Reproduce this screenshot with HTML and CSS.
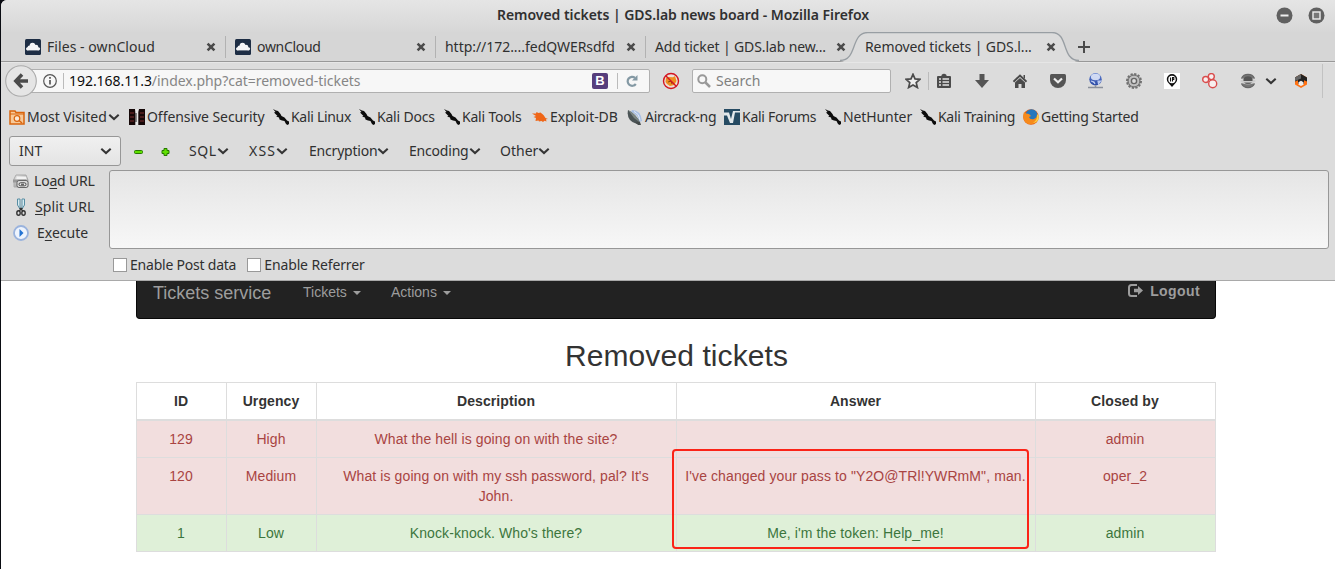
FILE: index.html
```html
<!DOCTYPE html>
<html lang="en">
<head>
<meta charset="utf-8">
<title>Removed tickets | GDS.lab news board</title>
<link rel="stylesheet" href="styles.css">
</head>
<body>
<svg class="defs" width="0" height="0">
  <defs>
    <linearGradient id="gBlue" x2="0" y2="1"><stop stop-color="#5f7fd0"/><stop offset="1" stop-color="#2c4aa4"/></linearGradient>
    <linearGradient id="gPan" x2="1" y2="1"><stop stop-color="#eee"/><stop offset="1" stop-color="#777"/></linearGradient>
    <symbol id="cloud" viewBox="0 0 16 16"><rect width="16" height="16" rx="1.5" fill="#1d2d44"/><g fill="#f4f5f7"><circle cx="7.500" cy="6.500" r="2.800"/><circle cx="4.500" cy="8.500" r="2"/><circle cx="11" cy="8" r="2.300"/><circle cx="2.600" cy="9.800" r="1.600"/><circle cx="13.500" cy="9.800" r="1.600"/><rect x="2.500" y="8.500" width="11" height="2.900"/></g></symbol>
    <symbol id="x" viewBox="0 0 10 10"><path d="M1.600 1.600l6.800 6.800M8.400 1.600L1.600 8.400" stroke="#4b4b4b" stroke-width="2.600"/></symbol>
    <symbol id="chev" viewBox="0 0 12 8"><path d="M1.300 1.800L6 6l4.700-4.200" fill="none" stroke="#353535" stroke-width="2.100"/></symbol>
    <symbol id="kali" viewBox="0 0 16 16"><path d="M0 0l3 1.500 2 .5 2.500 3 1 2 3 1.500 2.500 3 2 1 .5 2-2 1.500-1.500-1-1.500-3L9 11.500l-2.500-1-.5-2-3-1 1.500-.5L1 3.500 2.500 3z" fill="#0c0c0c"/></symbol>
  </defs>
</svg>
<div class="window">
  <div class="titlebar">
    <span class="title">Removed tickets | GDS.lab news board - Mozilla Firefox</span>
    <svg class="controls" width="49" height="17" viewBox="0 0 49 17"><circle cx="8.500" cy="8.500" r="8" fill="#606060"/><path d="M4.500 8.500h8" stroke="#eee" stroke-width="2"/><circle cx="40.500" cy="8.500" r="8" fill="#606060"/><rect x="37" y="5" width="7" height="7" fill="#777" stroke="#eee" stroke-width="1.400"/></svg>
  </div>

  <div class="tabs">
    <div class="tab"><svg class="i16"><use href="#cloud"/></svg><span class="t1">Files - ownCloud</span><svg class="x"><use href="#x"/></svg></div>
    <div class="tab"><svg class="i16"><use href="#cloud"/></svg><span class="t2">ownCloud</span><svg class="x"><use href="#x"/></svg></div>
    <div class="tab"><span class="t3">http://172....fedQWERsdfd</span><svg class="x"><use href="#x"/></svg></div>
    <div class="tab last"><span class="t4">Add ticket | GDS.lab new...</span><svg class="x"><use href="#x"/></svg></div>
    <div class="tab active">
      <svg class="shape" width="250" height="31" viewBox="0 0 250 31"><path d="M4 30C22 28.500 14 1 32 1H216C233 1 225 28.500 243 30z" fill="#dcdcdc"/><path d="M4 28.500C22 28.500 14 .5 32 .5H216C233 .5 225 28.500 243 28.500" fill="none" stroke="#989ea3" stroke-width="1.300"/></svg>
      <span class="t5">Removed tickets | GDS.l...</span><svg class="x"><use href="#x"/></svg>
    </div>
    <svg class="plus" width="12" height="12" viewBox="0 0 12 12"><path d="M6 0v12M0 6h12" stroke="#4b4b4b" stroke-width="2"/></svg>
  </div>

  <div class="nav">
    <svg class="back" width="32" height="32" viewBox="0 0 32 32"><circle cx="16" cy="16" r="15.300" fill="#e5e5e5" stroke="#aaa" stroke-width="1.100"/><path d="M17 9.500l-6.200 6.500 6.200 6.500M11.500 16H23" fill="none" stroke="#4b4b4b" stroke-width="3.500"/></svg>
    <div class="urlbar">
      <svg class="info" width="14" height="14" viewBox="0 0 14 14"><circle cx="7" cy="7" r="6.300" fill="none" stroke="#555" stroke-width="1.200"/><path d="M7 6v4.500M7 3v1.800" stroke="#555" stroke-width="1.700"/></svg>
      <span class="url"><b>192.168.11.3</b>/index.php?cat=removed-tickets</span>
      <span class="boot">B</span>
      <svg class="reload" width="12" height="12" viewBox="0 0 12 12"><path d="M9 2.800A4.500 4.500 0 1 0 9.800 9" fill="none" stroke="#8499a4" stroke-width="2.200"/><path d="M11.500 0v5.500H6z" fill="#8499a4"/></svg>
    </div>
    <svg class="nofox" width="18" height="18" viewBox="0 0 18 18"><circle cx="9" cy="9" r="7.500" fill="#ece0d8"/><path d="M4 6l2-1 5 .2L13 4l1.500 5-2.200 4-4.300 1-3-2-1.500-2z" fill="#ee8d20"/><path d="M6 10l3-1 1 3" stroke="#8a4810" fill="none"/><circle cx="9" cy="9" r="7.500" fill="none" stroke="#d31420" stroke-width="1.400"/><path d="M4 4l10 10" stroke="#d31420" stroke-width="1.400"/></svg>
    <div class="search"><svg width="14" height="14" viewBox="0 0 14 14"><circle cx="5.300" cy="5.300" r="4" fill="none" stroke="#999" stroke-width="2"/><path d="M8.500 8.500l4.500 4.500" stroke="#999" stroke-width="2.500"/></svg><span>Search</span></div>
    <div class="tools">
      <svg class="star" viewBox="0 0 16 16"><path d="M8 1.300l2 4.600 5 .4-3.800 3.300 1.200 4.900L8 11.900l-4.400 2.600 1.200-4.900L1 6.300l5-.4z" fill="#eee" stroke="#4b4b4b" stroke-width="1.700"/></svg>
      <i class="sep"></i>
      <svg viewBox="0 0 16 16"><path d="M2 3h3.500V2Q8-.5 10.500 2v1H14q1 0 1 1v10q0 1-1 1H2q-1 0-1-1V4q0-1 1-1z" fill="#4b4b4b"/><path d="M3 6h2M6.500 6H13M3 9h2M6.500 9H13M3 12h2M6.500 12H13" stroke="#e4e4e4" stroke-width="1.500"/></svg>
      <svg viewBox="0 0 16 16"><path d="M5.500 1h5v6H15l-7 8-7-8h4.500z" fill="#555"/></svg>
      <svg viewBox="0 0 16 16"><path d="M1.500 8.800L8 2.500l6.500 6.300" fill="none" stroke="#4b4b4b" stroke-width="1.900"/><path d="M3 9.500L8 5l5 4.500V15H9.500v-4h-3v4H3zM11.500 2H13v4l-1.500-1.500z" fill="#4b4b4b"/></svg>
      <svg viewBox="0 0 16 16"><path d="M1.500 1h13q1.500 0 1.500 1.500V7a8 8 0 0 1-16 0V2.500Q0 1 1.500 1z" fill="#555"/><path d="M4 5.500l4 3.800 4-3.800" fill="none" stroke="#eee" stroke-width="2.200"/></svg>
      <svg viewBox="0 0 16 16"><circle cx="7.500" cy="6.300" r="6.200" fill="url(#gBlue)"/><ellipse cx="7.500" cy="4" rx="4.600" ry="3.200" fill="#e6ecfb" opacity=".85"/><path d="M3 8l3 1 1 2M10 8l2.500 0-2 3z" stroke="#bccbf0" stroke-width="1.200" fill="#bccbf0"/><path d="M0 14.500h15M7.500 12.500v2" stroke="#8b919c" stroke-width="1.500"/></svg>
      <svg viewBox="0 0 16 16"><circle cx="8" cy="8" r="7" fill="#aaa" stroke="#707070" stroke-width="2" stroke-dasharray="2.200 1.460"/><circle cx="8" cy="8" r="5.800" fill="#c0c0c0" stroke="#777"/><circle cx="8" cy="8" r="2.600" fill="#ddd" stroke="#666" stroke-width="1.400"/></svg>
      <svg viewBox="0 0 16 16"><path d="M0 0h16v16H0z" fill="#fff"/><path d="M8 14L4 9.500a5.200 5.200 0 1 1 8 0z" fill="#111"/><circle cx="8" cy="6.500" r="3.700" fill="#fff"/><path d="M6.500 4.500v4M8.500 8.500v-4h1.300v2H8.500" fill="none" stroke="#111" stroke-width="1.100"/></svg>
      <svg viewBox="0 0 16 16"><g fill="#f8eeee" stroke="#d94c4c" stroke-width="1.400"><circle cx="9.300" cy="3.600" r="3"/><circle cx="3.700" cy="6.500" r="3"/><circle cx="10.700" cy="10.800" r="4"/></g></svg>
      <svg viewBox="0 0 16 16"><path d="M1.500 5.500a7 6.500 0 0 1 13 0M1.500 10.500a7 6.500 0 0 0 13 0" fill="#777" stroke="#666" stroke-width="1.200"/><path d="M0 8q8-7 16 0-8 7-16 0" fill="#ccc"/><path d="M3.500 5.500a5 4 0 0 1 9 0V8h-9z" fill="#555"/><path d="M4 9.500h8a4.500 3 0 0 1-8 0z" fill="#666"/></svg>
      <svg class="more"><use href="#chev"/></svg>
      <svg class="hex" viewBox="0 0 16 16"><path d="M8 1l6 3.500v7L8 15l-6-3.500v-7z" fill="#ff7112"/><path d="M8 1l6 3.500v4l-3-1.300V11L8 9.500 5 11V7.200L2 8.500v-4z" fill="#222"/><path d="M2 4.500L8 1v4.500L2 8z" fill="#666"/><path d="M5.500 9.300L8 7.800l2.500 1.500v2.400L8 13l-2.500-1.300z" fill="#eee"/></svg>
    </div>
  </div>

  <div class="bookmarks">
    <div><svg class="i16" viewBox="0 0 16 16"><path d="M1 2h5l1 1.500h8V15H1z" fill="#f7c999" stroke="#d9640c" stroke-width="1.500"/><path d="M1 5h14" stroke="#d9640c"/><circle cx="8" cy="9.500" r="2.800" fill="#fbe8d5" stroke="#d9640c" stroke-width="1.200"/><path d="M10 11.500l3 2.500" stroke="#d9640c" stroke-width="1.500"/></svg><span class="m1">Most Visited</span><svg class="chev"><use href="#chev"/></svg></div>
    <div><svg class="i16" viewBox="0 0 16 16"><path d="M0 0h16v16H0z" fill="#160808"/><path d="M1 4h4M1 8h4M1 12h4M11 4h4M11 8h4M11 12h4" stroke="#5a2222" stroke-width="1.500"/><path d="M6 0h4l-.7 3v13h-3V3z" fill="#e8e8e8"/><path d="M7 4v9" stroke="#222"/></svg><span class="m2">Offensive Security</span></div>
    <div><svg class="i16"><use href="#kali"/></svg><span class="m3">Kali Linux</span></div>
    <div><svg class="i16"><use href="#kali"/></svg><span class="m4">Kali Docs</span></div>
    <div><svg class="i16"><use href="#kali"/></svg><span class="m5">Kali Tools</span></div>
    <div><svg class="i16" viewBox="0 0 16 16"><path d="M0 4.500l4 0 .5-1.500 2 1 2-.5 3 2.500 2 3 2.500 1-2 .3.500 2.200-2-.8L11 13l-1.500-1-2.500.5-.5-1-3 .5L4 9 1.500 8 4 7z" fill="#ef6618"/></svg><span class="m6">Exploit-DB</span></div>
    <div><svg class="i16" viewBox="0 0 16 16"><path d="M5 1q9 0 10 11l-3 1Q11 5 4 3z" fill="#a9c0e4"/><path d="M7 2.500q5 2 6 9" fill="none" stroke="#e4ecf8"/><path d="M1 1Q-1 12 10 15l3-1.500Q9 5 1 1z" fill="#4b5456"/><path d="M1 1q8 4 12 12.500L7 9z" fill="#7c8784"/><path d="M8 13l3 3h3l-1-3z" fill="#454b4b"/></svg><span class="m7">Aircrack-ng</span></div>
    <div><svg class="i16" viewBox="0 0 16 16"><path d="M0 0h16v16H0z" fill="#264b63"/><path d="M0 3.500h5L7 10l2-8h7v1.500h-5L9 14H6L3 6.500H0z" fill="#e2e8eb"/></svg><span class="m8">Kali Forums</span></div>
    <div><svg class="i16"><use href="#kali"/></svg><span class="m9">NetHunter</span></div>
    <div><svg class="i16"><use href="#kali"/></svg><span class="m10">Kali Training</span></div>
    <div><svg class="i16" viewBox="0 0 16 16"><circle cx="8" cy="8" r="7.800" fill="#e65d13"/><circle cx="8.500" cy="6.200" r="6" fill="#2577bd"/><path d="M1 3q2 2 5 2l2 2-2 1q1 3 5 2 3-1 3-5 3 6-2 9-6 3-10-1Q-1 9 1 3z" fill="#f68a1c"/><path d="M14 5q1 6-4 9 6-1 5.800-7z" fill="#fdd440"/></svg><span class="m11">Getting Started</span></div>
  </div>

  <div class="hackmenu">
    <div class="select"><span>INT</span><svg class="chev"><use href="#chev"/></svg></div>
    <svg class="pm" width="36" height="10" viewBox="0 0 36 10"><rect x=".5" y="3.500" width="8" height="3" rx="1" fill="#5fe000" stroke="#277800"/><path d="M30 1.500h3v2h2v3h-2v2h-3v-2h-2v-3h2z" fill="#5fe000" stroke="#277800"/></svg>
    <div class="menus">
      <div><span class="h1">SQL</span><svg class="chev"><use href="#chev"/></svg></div>
      <div><span class="h2">XSS</span><svg class="chev"><use href="#chev"/></svg></div>
      <div><span class="h3">Encryption</span><svg class="chev"><use href="#chev"/></svg></div>
      <div><span class="h4">Encoding</span><svg class="chev"><use href="#chev"/></svg></div>
      <div><span class="h5">Other</span><svg class="chev"><use href="#chev"/></svg></div>
    </div>
  </div>

  <div class="hack">
    <div class="actions">
      <div><svg class="i16" viewBox="0 0 16 16"><path d="M3 2h10l2 5v7H1V6z" fill="url(#gPan)" stroke="#aaa"/><path d="M4 3.500h9l1 3H3z" fill="#f2f2f2"/><path d="M0 6.500h13v3H0z" fill="#999"/><rect x="4" y="7.500" width="11" height="7" rx="2" fill="#ddd" stroke="#666"/><rect x="6" y="9.800" width="7" height="3" rx="1.500" fill="#eee" stroke="#444"/><path d="M8 11.300h3" stroke="#444"/></svg><span class="a1">Lo<u>a</u>d URL</span></div>
      <div><svg width="16" height="18" viewBox="0 0 16 18"><path d="M4.500 1v6l2.500 4V1zM11.500 1v6L9 11V1z" fill="#d9ebf0" stroke="#568da3"/><g fill="none" stroke="#333" stroke-width="1.400"><ellipse cx="5.500" cy="15" rx="1.700" ry="2.200"/><ellipse cx="10.500" cy="15" rx="1.700" ry="2.200"/><path d="M6 13l3.300-3M10 13l-3.300-3"/></g></svg><span class="a2"><u>S</u>plit URL</span></div>
      <div><svg class="i16" viewBox="0 0 16 16"><circle cx="8" cy="8" r="7" fill="#eef4fd" stroke="#9ab3dd" stroke-width="1.800"/><path d="M6.500 4v8l4-4z" fill="#2373d2"/></svg><span class="a3">E<u>x</u>ecute</span></div>
    </div>
    <div class="textarea"></div>
  </div>
  <div class="checks"><i></i><span class="c1">Enable Post data</span><i></i><span class="c2">Enable Referrer</span></div>

  <div class="page">
    <div class="navbar">
      <span class="brand">Tickets service</span><span class="drop d1">Tickets</span><span class="drop">Actions</span>
      <span class="logout"><svg width="15" height="13" viewBox="0 0 15 13"><path d="M9 1H3.500Q1 1 1 3.500v6Q1 12 3.500 12H9" fill="none" stroke="#9d9d9d" stroke-width="2"/><path d="M6 4.700h4V2l5 4.500L10 11V8.300H6z" fill="#9d9d9d"/></svg>Logout</span>
    </div>
    <h1>Removed tickets</h1>
    <table>
      <colgroup><col class="w90"><col class="w90"><col class="w360"><col class="w360b"><col></colgroup>
      <thead><tr><th>ID</th><th>Urgency</th><th>Description</th><th>Answer</th><th>Closed by</th></tr></thead>
      <tbody>
        <tr class="danger"><td>129</td><td>High</td><td>What the hell is going on with the site?</td><td></td><td>admin</td></tr>
        <tr class="danger"><td>120</td><td>Medium</td><td>What is going on with my ssh password, pal? It's<br>John.</td><td>I've changed your pass to "Y2O@TRl!YWRmM", man.</td><td>oper_2</td></tr>
        <tr class="success"><td>1</td><td>Low</td><td>Knock-knock. Who's there?</td><td>Me, i'm the token: Help_me!</td><td>admin</td></tr>
      </tbody>
    </table>
    <div class="highlight"></div>
  </div>
</div>
</body>
</html>
```
FILE: styles.css
```css
* { box-sizing: border-box; }
body { margin: 0; background: #0a0c12; font: 14px/20px "Noto Sans", sans-serif; color: #303030; }
.defs { position: absolute; }
svg { display: block; flex: none; }
span { white-space: nowrap; }
.window { margin-left: 1px; width: 1334px; height: 569px; overflow: hidden; border-radius: 6px 0 0 0; background: #dcdcdc; }
.i16 { width: 16px; height: 16px; }
.chev { width: 12px; height: 8px; }

.titlebar { height: 32px; display: flex; align-items: center; background: linear-gradient(#e5e5e5, #d7d7d7); padding: 0 10px 2px 496px; }
.title { font-weight: 600; letter-spacing: -.04px; margin-right: auto; }

.tabs { height: 30px; display: flex; background: #d6d6d6; border-bottom: 1px solid #989898; padding-left: 15px; }
.tab { position: relative; width: 210px; height: 30px; display: flex; align-items: center; padding: 0 10px 0 9px; }
.tab:not(.active):not(.last)::after { content: ""; position: absolute; right: 0; top: 4px; width: 1px; height: 22px; background: #b2b2b2; }
.tab .i16 { margin-right: 6px; }
.tab span { flex: 1; min-width: 0; z-index: 1; }
.t1 { letter-spacing: .06px; }
.t2 { letter-spacing: -.3px; }
.t3 { letter-spacing: -.04px; }
.t4 { letter-spacing: -.12px; }
.t5 { letter-spacing: -.1px; }
.x { width: 10px; height: 10px; z-index: 1; }
.shape { position: absolute; left: -20px; top: 0; }
.plus { margin: 9px 0 0 12px; }

.nav { height: 39px; display: flex; align-items: center; border-top: 1px solid #e6e6e6; padding-bottom: 2px; }
.back { margin-left: 4px; z-index: 1; }
.urlbar { width: 621px; height: 24px; margin-left: -8px; background: #f7f7f7; border: 1px solid #b0b0b0; border-radius: 2px; display: flex; align-items: center; padding-left: 13px; }
.url { color: #868686; border-left: 1px solid #bbb; padding-left: 5px; margin-left: 6px; line-height: 16px; letter-spacing: -.04px; }
.url b { font-weight: 400; color: #0c0c0c; }
.boot { margin-left: auto; width: 16px; height: 16px; background: #563d7c; border-radius: 2px; color: #fff; font: bold 13px/16px "Liberation Sans", sans-serif; text-align: center; }
.boot + .reload { margin: 0 11px 0 8px; }
.boot::after { content: ""; float: right; width: 1px; height: 16px; margin-right: -10px; background: #bbb; }
.boot { margin-right: 10px; }
.nofox { margin-left: 12px; }
.search { width: 199px; height: 24px; margin-left: 12px; background: #f7f7f7; border: 1px solid #b0b0b0; border-radius: 2px; display: flex; align-items: center; padding-left: 4px; gap: 5px; color: #808080; }
.tools { flex: 1; height: 34px; display: flex; align-items: center; gap: 22px; margin: 0 12px 0 14px; border-right: 1px solid #c2c2c2; }
.tools svg { width: 16px; height: 16px; }
.sep { width: 1px; height: 18px; background: #bbb; margin: 0 -15px; }
.tools .more { width: 12px; height: 8px; margin-left: -13px; }
.tools .hex { margin-left: -6px; }

.bookmarks { height: 31px; padding: 0 0 0 8px; display: grid; align-items: center; grid-template-columns: 120px 144px 86px 85px 88px 95px 97px 101px 95px 103px 120px; }
.bookmarks div { display: flex; align-items: center; gap: 2px; }
.bookmarks span { letter-spacing: -.2px; }
.bookmarks .chev { margin-left: -1px; }
.bookmarks .m1 { letter-spacing: -.06px; }
.bookmarks .m2 { letter-spacing: -.06px; }
.bookmarks .m3 { letter-spacing: -.3px; }
.bookmarks .m6 { letter-spacing: -.06px; }
.bookmarks .m7 { letter-spacing: -.25px; }
.bookmarks .m8 { letter-spacing: -.28px; }
.bookmarks .m9 { letter-spacing: -.1px; }
.bookmarks .m10 { letter-spacing: -.3px; }
.hackmenu { height: 38px; display: flex; align-items: center; padding-left: 8px; }
.select { width: 112px; height: 30px; border: 1px solid #979797; border-radius: 3px; background: linear-gradient(#f0f0f0, #e4e4e4); display: flex; align-items: center; justify-content: space-between; padding: 0 8px 0 9px; }
.pm { margin: 1px 0 0 13px; }
.menus { margin-left: 19px; display: grid; grid-template-columns: 60px 60px 100px 91px 80px; }
.menus div { display: flex; align-items: center; }
.h1 { letter-spacing: .6px; font-size: inherit; }
.h2 { letter-spacing: 1.2px; }
.h3, .h4 { letter-spacing: -.2px; }

.hack { display: flex; height: 79px; }
.actions { width: 108px; padding: 0 0 0 12px; display: flex; flex-direction: column; }
.actions div { height: 26px; padding-bottom: 4px; display: flex; align-items: center; gap: 5px; }
.a1 { letter-spacing: -.2px; }
.a2 { letter-spacing: .1px; margin-left: 1px; }
.a3 { margin-left: 3px; }
.actions u { text-underline-offset: 2px; }
.textarea { width: 1220px; height: 79px; border: 1px solid #979797; border-radius: 3px; background: linear-gradient(#e5e5e5, #f7f7f7); }
.checks { height: 32px; display: flex; align-items: center; padding-left: 112px; border-bottom: 1px solid #a9a9a9; }
.checks i { width: 14px; height: 14px; background: #fff; border: 1px solid #999; margin-right: 3px; }
.c1 { margin-right: 11px; letter-spacing: -.22px; }
.c2 { letter-spacing: -.13px; }

.page { position: relative; height: 288px; background: #fff; font: 14px/20px "Liberation Sans", Arial, sans-serif; color: #333; padding-left: 135px; }
.navbar { width: 1080px; height: 38px; background: #222; border: 1px solid #080808; border-top: 0; border-radius: 0 0 4px 4px; padding: 0 15px 14px 16px; display: flex; align-items: center; color: #9d9d9d; }
.brand { font-size: 18px; width: 150px; }
.drop { display: flex; align-items: center; width: 88px; padding-bottom: 2px; }
.drop::after { content: ""; border: 4px solid transparent; border-top-color: #9d9d9d; border-bottom: 0; margin: 2px 0 0 6px; }
.logout { margin-left: auto; font-weight: 700; display: flex; align-items: center; gap: 7px; padding-bottom: 4px; letter-spacing: .4px; }
h1 { width: 1081px; margin: 20px 0 10px; font-size: 30px; line-height: 33px; font-weight: 400; text-align: center; letter-spacing: .1px; }
table { width: 1080px; table-layout: fixed; border-collapse: collapse; text-align: center; letter-spacing: .1px; }
.w90 { width: 90px; } .w360 { width: 360px; } .w360b { width: 359px; }
th, td { border: 1px solid #ddd; padding: 8px 9px 8px 8px; vertical-align: top; }
td:nth-child(4) { white-space: nowrap; }
td { height: 37px; }
th { border-bottom-width: 2px; }
.danger { background: #f2dede; color: #a94442; }
.success { background: #dff0d8; color: #3c763d; }
.highlight { position: absolute; left: 671px; top: 168px; width: 357px; height: 100px; border: 2px solid #fb2418; border-radius: 4px; }
```
